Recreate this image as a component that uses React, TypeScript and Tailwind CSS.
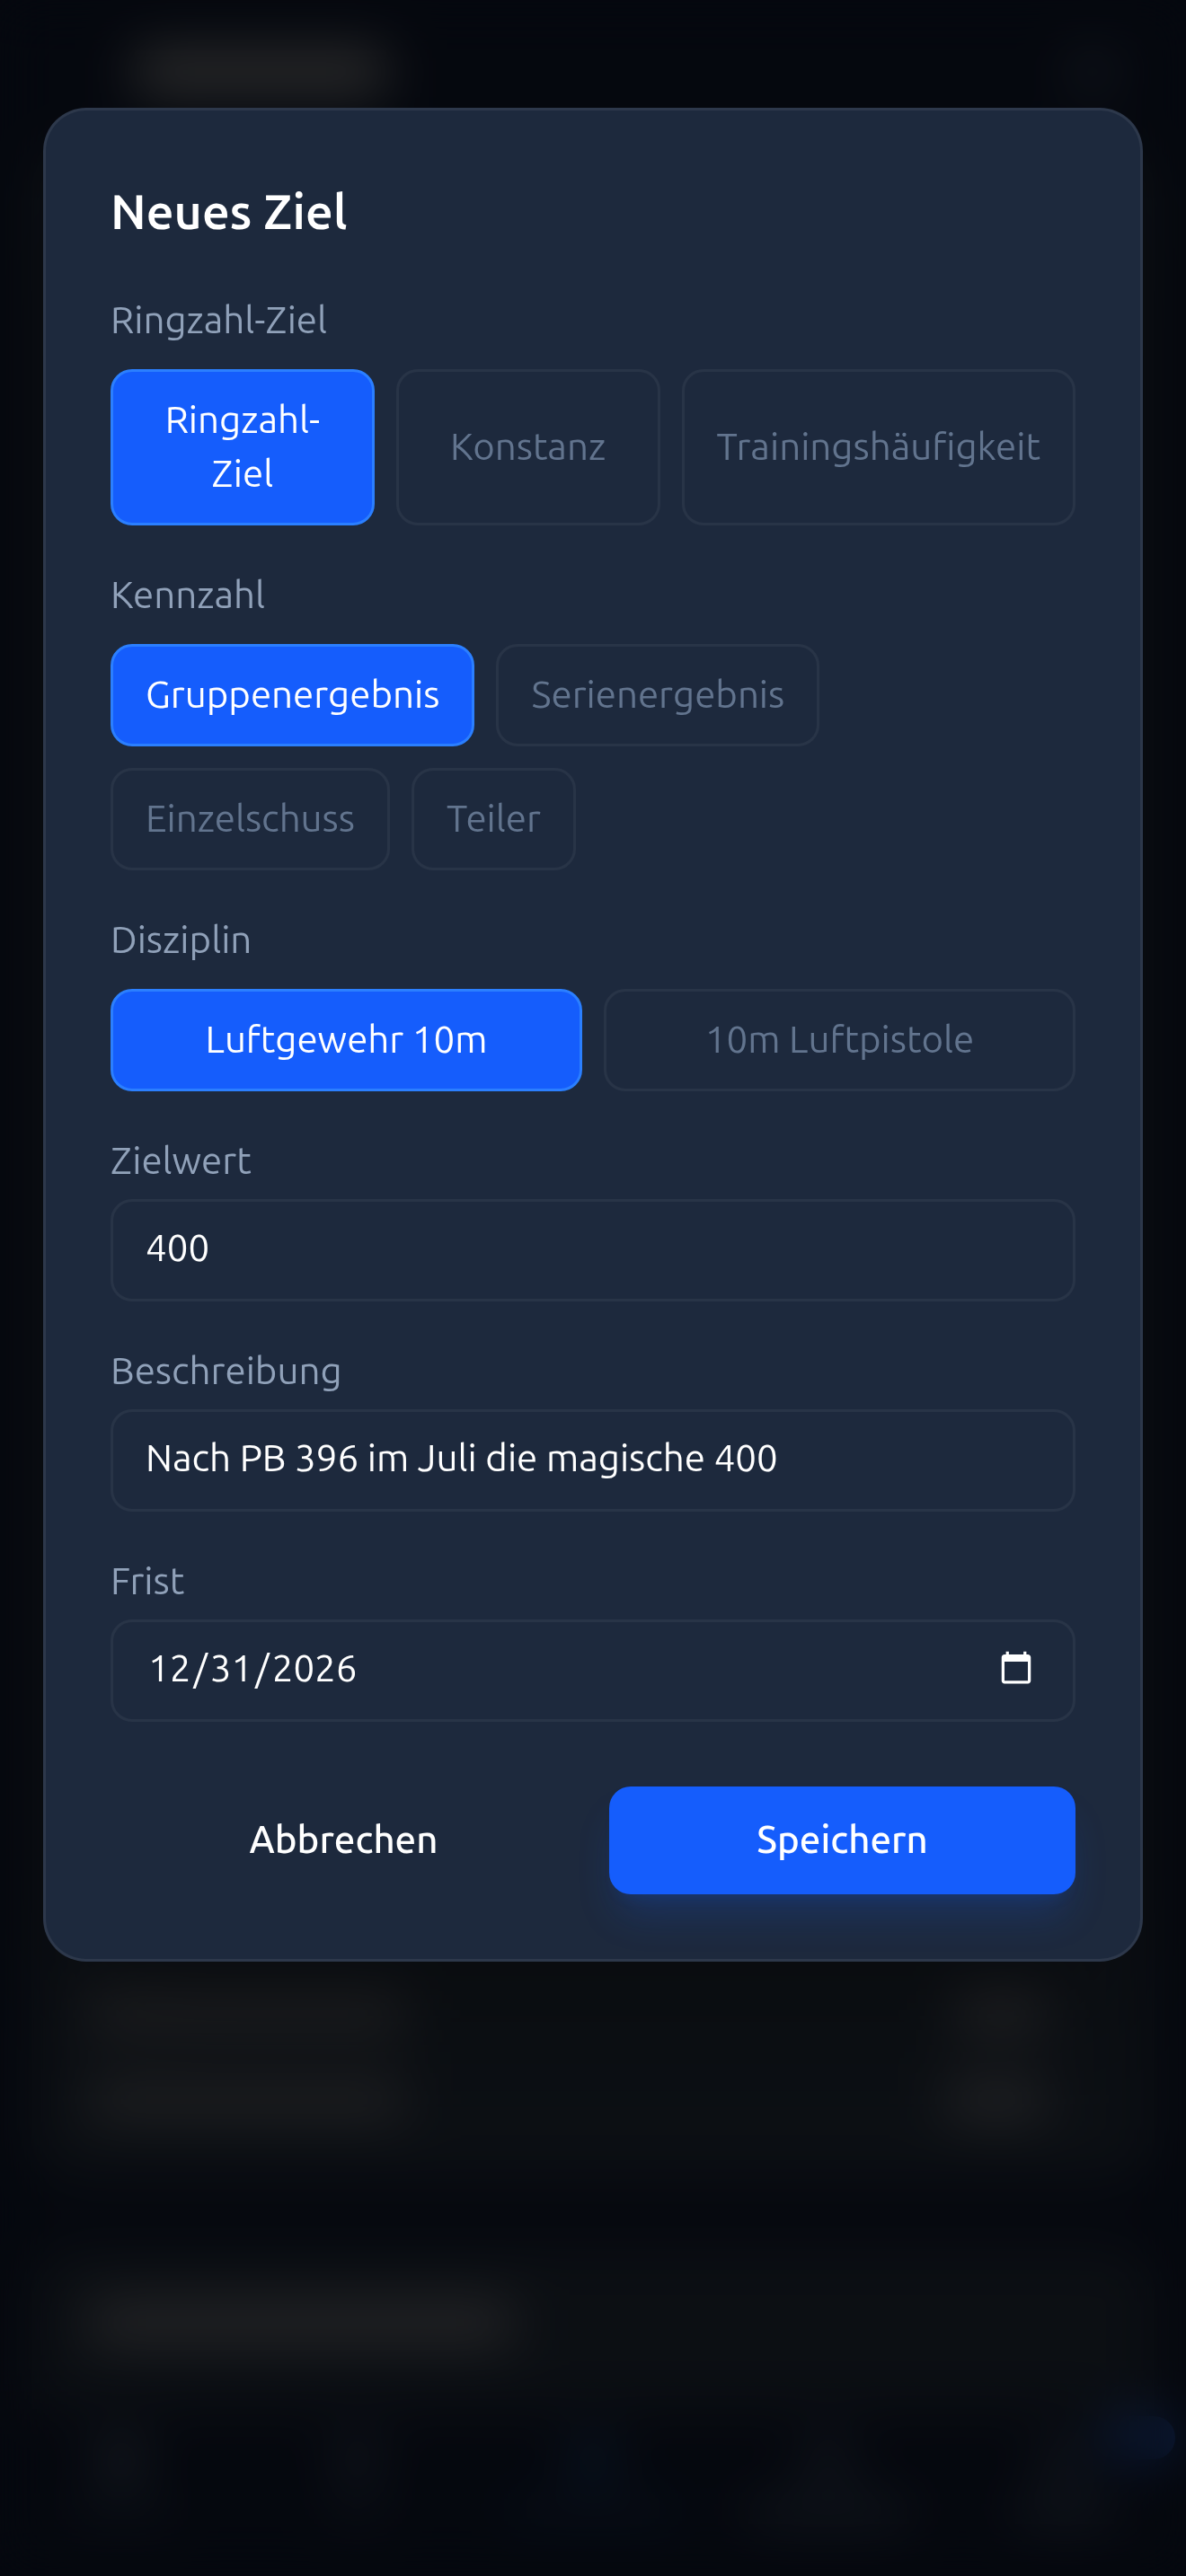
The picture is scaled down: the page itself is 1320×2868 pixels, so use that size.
import { useState } from "react";
import clsx from "clsx";

const goalTypes = ["Ringzahl-Ziel", "Konstanz", "Trainingshäufigkeit"];
const metrics = ["Gruppenergebnis", "Serienergebnis", "Einzelschuss", "Teiler"];
const disciplines = ["Luftgewehr 10m", "10m Luftpistole"];

const labelClass = "block text-[42px] leading-[60px] text-slate-400";
const inputClass =
  "block h-[114px] w-full rounded-[24px] border-[3px] border-white/5 bg-transparent px-9 pt-5 pb-6 text-[42px] leading-[60px] text-white outline-none";

// native parts of the date field
const dateClass =
  "scheme-dark [&::-webkit-datetime-edit-month-field]:px-[3px] [&::-webkit-datetime-edit-day-field]:px-[3px] [&::-webkit-datetime-edit-year-field]:px-[3px] [&::-webkit-calendar-picker-indicator]:p-[6px]";

export default function App() {
  return (
    <div className="relative min-h-screen bg-slate-900 font-['Ubuntu_Sans','Ubuntu','Noto_Sans',sans-serif]">
      <PageBehind />

      <div className="absolute inset-0 flex items-start justify-center bg-black/60 px-12 pt-[120px] backdrop-blur-[30px]">
        <GoalDialog />
      </div>
    </div>
  );
}

function GoalDialog() {
  const [type, setType] = useState(goalTypes[0]);
  const [metric, setMetric] = useState(metrics[0]);
  const [discipline, setDiscipline] = useState(disciplines[0]);

  return (
    <form
      role="dialog"
      aria-labelledby="dialog-title"
      className="flex w-full flex-col gap-12 rounded-[48px] border-[3px] border-white/7 bg-slate-800 p-[72px] shadow-[0_75px_150px_-36px_rgba(0,0,0,0.25)]"
      onSubmit={(e) => e.preventDefault()}
    >
      <h2 id="dialog-title" className="text-[54px] leading-[84px] font-semibold text-white">
        Neues Ziel
      </h2>

      <OptionGroup label="Ringzahl-Ziel" options={goalTypes} value={type} onChange={setType} grow />
      <OptionGroup label="Kennzahl" options={metrics} value={metric} onChange={setMetric} />
      <OptionGroup label="Disziplin" options={disciplines} value={discipline} onChange={setDiscipline} grow />

      <div className="flex flex-col gap-3">
        <label htmlFor="target" className={labelClass}>
          Zielwert
        </label>
        <input id="target" inputMode="numeric" defaultValue="400" className={inputClass} />
      </div>

      <div className="flex flex-col gap-3">
        <label htmlFor="description" className={labelClass}>
          Beschreibung
        </label>
        <input id="description" type="text" defaultValue="Nach PB 396 im Juli die magische 400" className={inputClass} />
      </div>

      <div className="flex flex-col gap-3">
        <label htmlFor="deadline" className={labelClass}>
          Frist
        </label>
        <input id="deadline" type="date" defaultValue="2026-12-31" className={clsx(inputClass, dateClass)} />
      </div>

      <div className="flex gap-9 pt-6">
        <button type="button" className="h-[120px] flex-1 rounded-[24px] text-[42px] leading-[60px] font-medium text-white">
          Abbrechen
        </button>
        <button
          type="submit"
          className="h-[120px] flex-1 rounded-[24px] bg-[#155dfc] text-[42px] leading-[60px] font-medium text-white shadow-[0_30px_45px_-9px_rgba(21,93,252,0.2),0_12px_18px_-12px_rgba(21,93,252,0.2)]"
        >
          Speichern
        </button>
      </div>
    </form>
  );
}

type OptionGroupProps = {
  label: string;
  options: string[];
  value: string;
  onChange: (value: string) => void;
  grow?: boolean;
};

function OptionGroup({ label, options, value, onChange, grow }: OptionGroupProps) {
  return (
    <div role="group" aria-label={label} className="flex flex-col gap-6">
      <span className={labelClass}>{label}</span>
      <div className={clsx("flex gap-6", !grow && "flex-wrap")}>
        {options.map((option) => (
          <button
            key={option}
            type="button"
            aria-pressed={option === value}
            onClick={() => onChange(option)}
            className={clsx(
              "rounded-[24px] border-[3px] px-9 py-6 text-[42px] leading-[60px]",
              grow && "flex-1",
              option === value ? "border-[#2b7fff] bg-[#155dfc] text-white" : "border-white/5 text-slate-500"
            )}
          >
            {option}
          </button>
        ))}
      </div>
    </div>
  );
}

// dimmed page under the dialog, only soft shapes of it show through
function PageBehind() {
  return (
    <div aria-hidden="true" className="flex h-screen flex-col bg-[#0d1424]">
      <div className="flex items-center justify-between py-14 pr-20 pl-[150px]">
        <div className="h-12 w-[280px] bg-neutral-500" />
        <div className="size-12 rounded-full bg-gray-700" />
      </div>

      <div className="flex flex-1 flex-col justify-end gap-[72px] px-9">
        <div className="flex flex-1 flex-col justify-end gap-14 rounded-[48px] bg-[#1e2631] px-16 pb-[72px]">
          <div className="flex justify-between pr-14">
            <div className="h-10 w-[350px] bg-[#55565a]" />
            <div className="h-10 w-[100px] bg-[#5c5d62]" />
          </div>
          <div className="flex justify-between pr-14">
            <div className="h-10 w-[350px] bg-[#55565a]" />
            <div className="h-10 w-[110px] bg-[#5c5d62]" />
          </div>
        </div>
        <div className="rounded-t-[48px] bg-[#1e2631] px-16 pt-[60px] pb-[72px]">
          <div className="h-12 w-[470px] bg-[#5c5d62]" />
        </div>
      </div>

      <div className="relative grid h-[186px] grid-cols-5 px-1 pt-8">
        <div className="absolute top-2 right-3 h-12 w-20 rounded-full bg-[#1f4694]" />
        <NavShape icon="bg-gray-600" text="w-[110px] bg-gray-800" />
        <NavShape icon="bg-gray-700" text="w-[60px] bg-gray-800" />
        <NavShape icon="bg-[#1c4068]" text="w-[190px] bg-[#132742]" />
        <NavShape icon="bg-gray-700" text="w-[180px] bg-gray-700" />
        <NavShape icon="bg-gray-700" text="w-[110px] bg-gray-700" />
      </div>
    </div>
  );
}

function NavShape({ icon, text }: { icon: string; text: string }) {
  return (
    <div className="flex flex-col items-center gap-6">
      <div className={clsx("size-12 rounded-full", icon)} />
      <div className={clsx("h-6", text)} />
    </div>
  );
}
